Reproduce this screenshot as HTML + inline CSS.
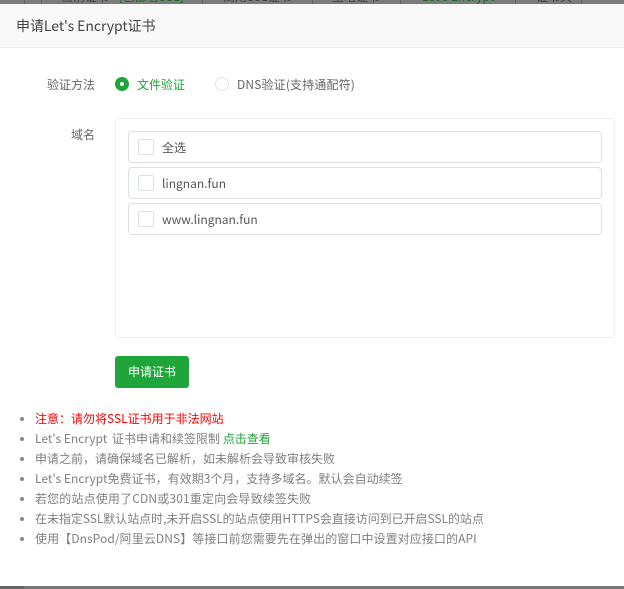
<!DOCTYPE html>
<html><head><meta charset="utf-8">
<style>
html,body{margin:0;padding:0;background:#fff}
#p{position:relative;width:624px;height:589px;overflow:hidden;background:#fff;font-family:"Noto Sans CJK SC","Liberation Sans",sans-serif;font-size:12px;color:#666}
.a{position:absolute;white-space:nowrap;line-height:20px}
.box{position:absolute;box-sizing:border-box;background:#fff}
.row{position:absolute;left:128px;width:474px;height:32px;box-sizing:border-box;border:1px solid #dcdfe6;border-radius:4px}
.cb{position:absolute;left:138px;width:16px;height:16px;box-sizing:border-box;border:1px solid #dcdfe6;border-radius:2px;background:#fff}
.t{position:absolute;left:162px;line-height:20px;color:#555;white-space:nowrap;font-size:12px}
ul{position:absolute;left:0;top:409px;margin:0;padding:0;list-style:none;width:624px}
li{position:relative;height:20px;line-height:20px;padding-left:35px;color:#808080;white-space:nowrap;font-size:12px}
li:before{content:"";position:absolute;left:20px;top:8px;width:4px;height:4px;border-radius:50%;background:#888}
</style></head><body>
<div id="p">
<div class="box" style="left:0;top:0;width:624px;height:4px;background:#7b7b7b;overflow:hidden;color:#444">
<span class="a" style="left:61px;top:-13px">当前证书</span>
<span class="a" style="left:119px;top:-13px;color:#1c6b2d">[已部署SSL]</span>
<span class="a" style="left:223px;top:-13px">商用SSL证书</span>
<span class="a" style="left:332px;top:-13px">宝塔证书</span>
<span class="a" style="left:422px;top:-13px;color:#1c6b2d">Let's Encrypt</span>
<span class="a" style="left:536px;top:-13px">证书夹</span>
<i style="position:absolute;left:24px;top:0;width:1px;height:4px;background:#666"></i>
<i style="position:absolute;left:41px;top:0;width:1px;height:4px;background:#666"></i>
<i style="position:absolute;left:202px;top:0;width:1px;height:4px;background:#666"></i>
<i style="position:absolute;left:312px;top:0;width:1px;height:4px;background:#666"></i>
<i style="position:absolute;left:400px;top:0;width:1px;height:4px;background:#666"></i>
<i style="position:absolute;left:515px;top:0;width:1px;height:4px;background:#666"></i>
<i style="position:absolute;left:581px;top:0;width:1px;height:4px;background:#666"></i>
</div>
<div class="box" style="left:0;top:4px;width:624px;height:44px;background:#f8f8f8;border-bottom:1px solid #eee"></div>
<div class="a" style="left:16px;top:16px;font-size:14px;color:#444;letter-spacing:-.05px">申请Let's Encrypt证书</div>

<div class="a" style="left:47px;top:75px;color:#666">验证方法</div>
<div class="box" style="left:115px;top:77px;width:14px;height:14px;border-radius:50%;background:#20a53a"></div>
<div class="box" style="left:120px;top:82px;width:4px;height:4px;border-radius:50%;background:#fff"></div>
<div class="a" style="left:137px;top:75px;color:#20a53a">文件验证</div>
<div class="box" style="left:215px;top:77px;width:14px;height:14px;border-radius:50%;border:1px solid #e4e4e8"></div>
<div class="a" style="left:237px;top:75px;color:#666;letter-spacing:.15px">DNS验证(支持通配符)</div>

<div class="a" style="left:71px;top:125px;color:#666">域名</div>
<div class="box" style="left:115px;top:118px;width:500px;height:220px;border:1px solid #eee;border-radius:3px"></div>
<div class="row" style="top:131px"></div>
<div class="cb" style="top:139px"></div>
<div class="t" style="top:138px">全选</div>
<div class="row" style="top:167px"></div>
<div class="cb" style="top:175px"></div>
<div class="t" style="top:174px">lingnan.fun</div>
<div class="row" style="top:203px"></div>
<div class="cb" style="top:211px"></div>
<div class="t" style="top:210px">www.lingnan.fun</div>

<div class="box" style="left:115px;top:356px;width:74px;height:32px;background:#20a53a;border-radius:3px;color:#fff;text-align:center;line-height:32px;font-size:12px">申请证书</div>

<ul>
<li style="color:#f00">注意：请勿将SSL证书用于非法网站</li>
<li>Let's Encrypt<span style="margin-left:2px"> </span>证书申请和续签限制 <span style="color:#20a53a">点击查看</span></li>
<li>申请之前，请确保域名已解析，如未解析会导致审核失败</li>
<li style="letter-spacing:.02px">Let's Encrypt免费证书，有效期3个月，支持多域名。默认会自动续签</li>
<li style="letter-spacing:.15px">若您的站点使用了CDN或301重定向会导致续签失败</li>
<li style="letter-spacing:-.05px">在未指定SSL默认站点时,未开启SSL的站点使用HTTPS会直接访问到已开启SSL的站点</li>
<li style="letter-spacing:.08px">使用【DnsPod/阿里云DNS】等接口前您需要先在弹出的窗口中设置对应接口的API</li>
</ul>
<div class="box" style="left:0;top:586px;width:624px;height:3px;background:#777"></div>
<div class="box" style="left:0;top:586px;width:24px;height:3px;background:#666"></div>
</div>
</body></html>
